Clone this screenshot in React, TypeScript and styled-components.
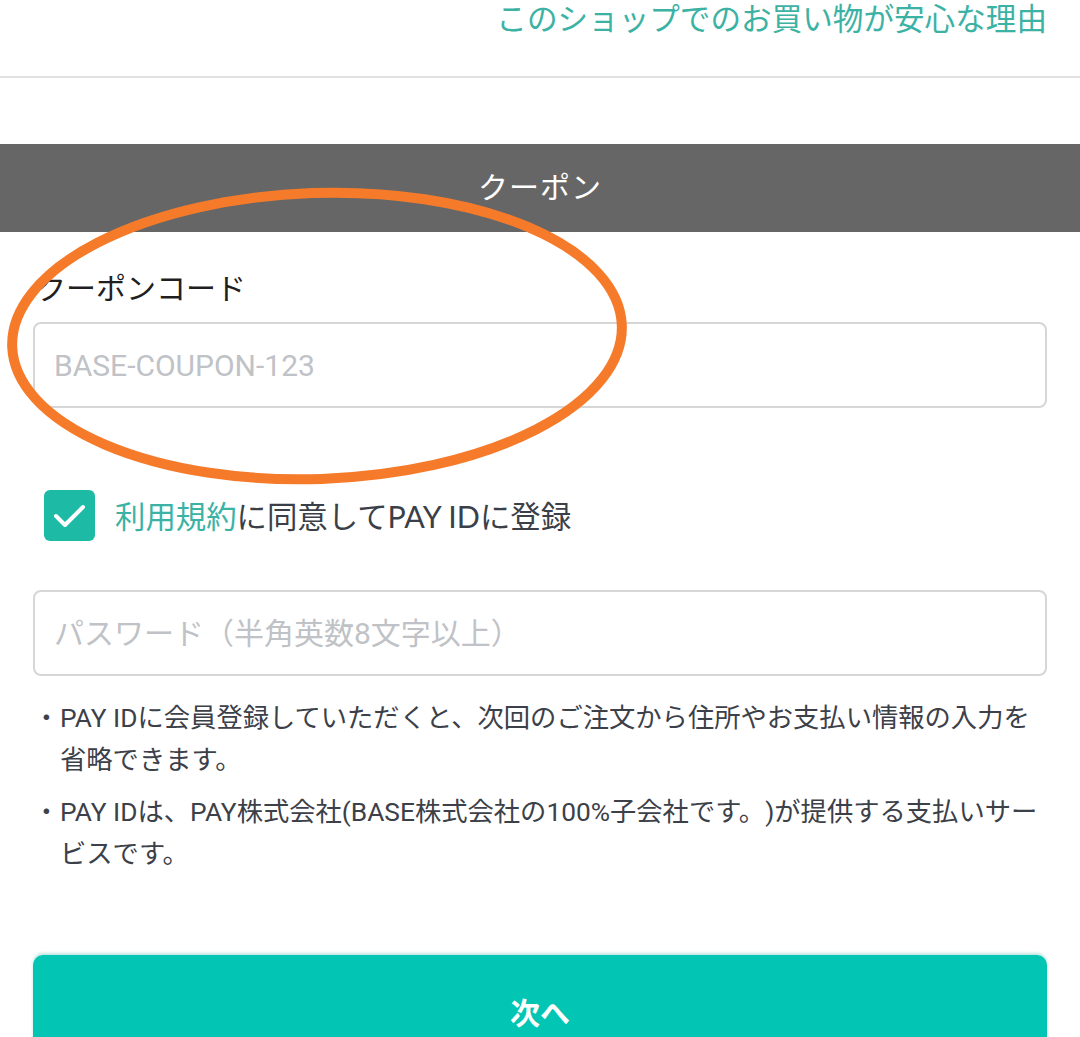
import React from "react";
import styled, { createGlobalStyle } from "styled-components";

const GlobalStyle = createGlobalStyle`
  html, body {
    margin: 0;
    padding: 0;
    background: #ffffff;
  }
  body {
    font-family: "Roboto", "Noto Sans CJK JP", sans-serif;
    -webkit-font-smoothing: antialiased;
    text-spacing-trim: space-all;
  }
`;

const Page = styled.div`
  position: relative;
  width: 1080px;
  height: 1037px;
  overflow: hidden;
  background: #fff;
`;

const TopBar = styled.div`
  height: 76px;
  border-bottom: 2px solid #e2e2e2;
  display: flex;
  justify-content: flex-end;
  align-items: flex-start;
  padding-right: 33px;
`;

const SafeLink = styled.a`
  font-family: "Noto Sans CJK JP", sans-serif;
  font-size: 30.6px;
  line-height: 36px;
  color: #3cb2a4;
  text-decoration: none;
  margin-top: -1px;
`;

const SectionHeader = styled.div`
  margin-top: 66px;
  height: 88px;
  box-sizing: border-box;
  padding-bottom: 6px;
  background: #666666;
  color: #fff;
  display: flex;
  align-items: center;
  justify-content: center;
  font-family: "Noto Sans CJK JP", sans-serif;
  font-size: 30px;
  letter-spacing: 1px;
`;

const Body = styled.div`
  padding: 0 33px;
`;

const Label = styled.div`
  margin-top: 34px;
  margin-left: 3px;
  height: 42px;
  line-height: 40px;
  font-family: "Noto Sans CJK JP", sans-serif;
  font-size: 30px;
  color: #1f1f1f;
`;

const Field = styled.input<{ $top: number }>`
  display: block;
  box-sizing: border-box;
  width: 100%;
  height: 86px;
  margin-top: ${(p) => p.$top}px;
  padding: 0 19px;
  border: 2px solid #d6d6d6;
  border-radius: 8px;
  font-family: "Roboto", "Noto Sans CJK JP", sans-serif;
  font-size: 30px;
  color: #333;
  outline: none;
  background: #fff;

  &::placeholder {
    color: #bfc2c6;
  }
`;

const AgreeRow = styled.label`
  margin-top: 82px;
  margin-left: 11px;
  display: flex;
  align-items: center;
  gap: 20px;
  height: 51px;
`;

const CheckBox = styled.span`
  width: 51px;
  height: 51px;
  border-radius: 6px;
  background: #1dbaa6;
  display: flex;
  align-items: center;
  justify-content: center;
  flex-shrink: 0;
`;

const AgreeText = styled.span`
  font-family: "Lato", "Noto Sans CJK JP", sans-serif;
  font-size: 30.4px;
  color: #3b3f47;
  line-height: 40px;
`;

const TermsLink = styled.a`
  color: #3cb2a4;
  text-decoration: none;
`;

const Notes = styled.ul`
  list-style: none;
  margin: 21px 0 0;
  padding: 0;
  display: flex;
  flex-direction: column;
  gap: 10px;
`;

const Note = styled.li`
  display: flex;
  font-size: 26.3px;
  line-height: 42px;
  color: #3c4048;
`;

const Bullet = styled.span`
  width: 27px;
  flex-shrink: 0;
  text-align: center;
`;

const NextButton = styled.button`
  display: block;
  width: 100%;
  height: 112px;
  margin-top: 80px;
  border: none;
  border-radius: 10px;
  background: #02c5b4;
  box-shadow: 0 -2px 3px rgba(0, 150, 140, 0.25);
  color: #fff;
  font-family: "Noto Sans CJK JP", sans-serif;
  font-weight: 700;
  font-size: 30px;
`;

const Annotation = styled.svg`
  position: absolute;
  left: 0;
  top: 185px;
  pointer-events: none;
`;

export default function App() {
  return (
    <Page>
      <GlobalStyle />
      <TopBar>
        <SafeLink href="#">このショップでのお買い物が安心な理由</SafeLink>
      </TopBar>

      <SectionHeader>クーポン</SectionHeader>

      <Body>
        <Label>クーポンコード</Label>
        <Field $top={14} placeholder="BASE-COUPON-123" />

        <AgreeRow>
          <CheckBox>
            <svg width="51" height="51" viewBox="0 0 51 51">
              <polyline
                points="12,26 21,35 39,17"
                fill="none"
                stroke="#fff"
                strokeWidth="4"
                strokeLinecap="round"
                strokeLinejoin="round"
              />
            </svg>
          </CheckBox>
          <AgreeText>
            <TermsLink href="#">利用規約</TermsLink>に同意してPAY IDに登録
          </AgreeText>
        </AgreeRow>

        <Field $top={49} placeholder="パスワード（半角英数8文字以上）" />

        <Notes>
          <Note>
            <Bullet>・</Bullet>
            <span>
              PAY IDに会員登録していただくと、次回のご注文から住所やお支払い情報の入力を
              <br />
              省略できます。
            </span>
          </Note>
          <Note>
            <Bullet>・</Bullet>
            <span>
              PAY IDは、PAY株式会社(BASE株式会社の100%子会社です。)が提供する支払いサー
              <br />
              ビスです。
            </span>
          </Note>
        </Notes>

        <NextButton>次へ</NextButton>
      </Body>

      <Annotation width="640" height="310" viewBox="0 0 640 310">
        <ellipse
          cx="317"
          cy="151"
          rx="305"
          ry="143"
          transform="rotate(-2 317 151)"
          fill="none"
          stroke="#f57b2b"
          strokeWidth="10"
        />
      </Annotation>
    </Page>
  );
}
